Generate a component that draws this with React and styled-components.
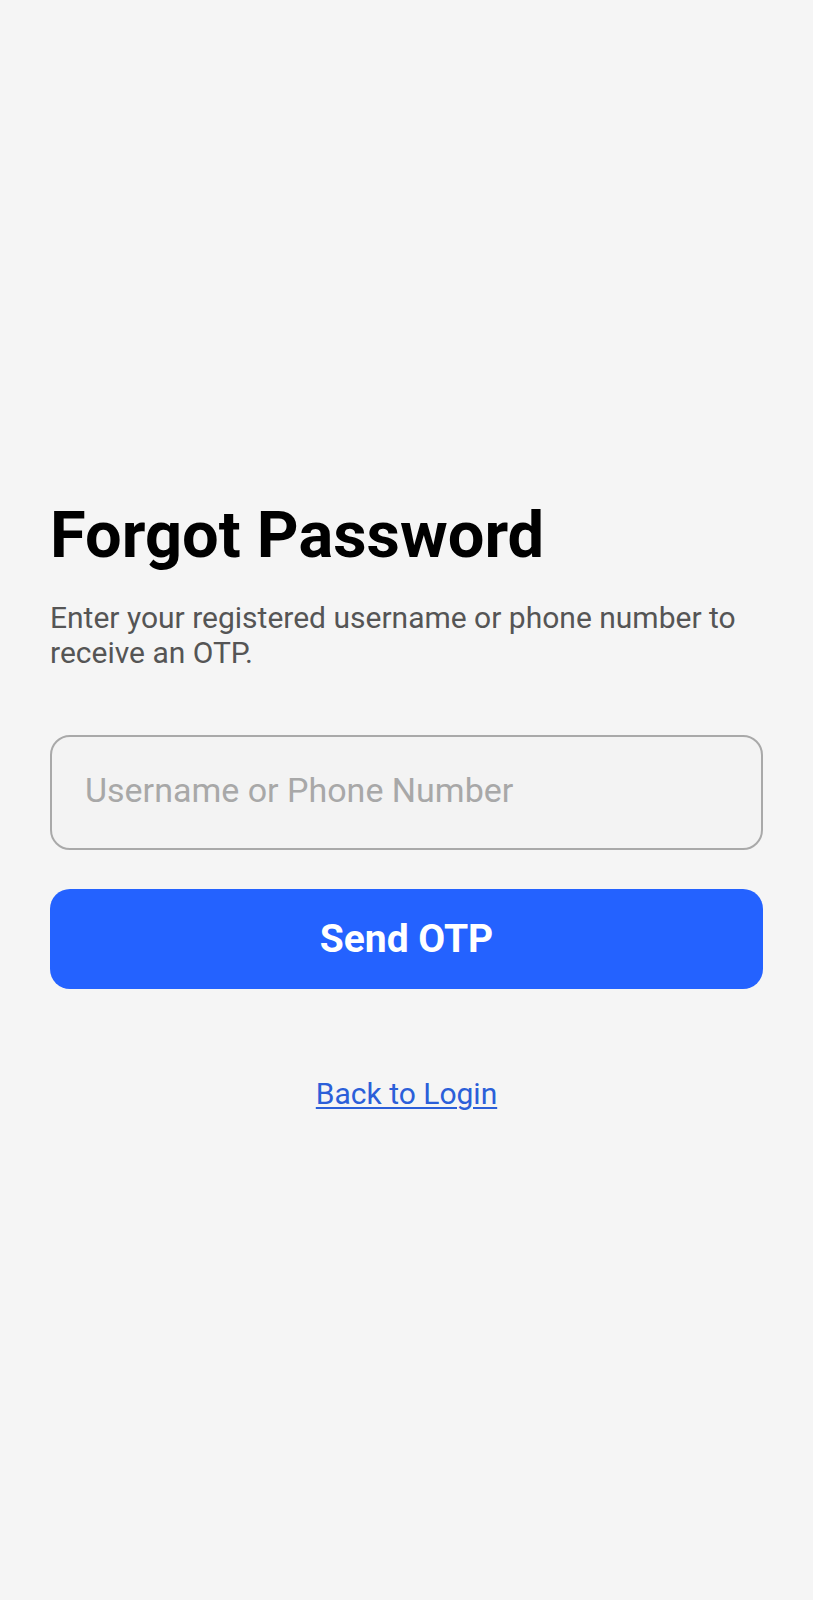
import React, { useState } from 'react';
import styled, { createGlobalStyle } from 'styled-components';

const GlobalStyle = createGlobalStyle`
  html, body {
    margin: 0;
    padding: 0;
    background: #f5f5f5;
  }
  * {
    box-sizing: border-box;
  }
`;

const Screen = styled.div`
  min-height: 100vh;
  padding: 12px 50px 0;
  display: flex;
  flex-direction: column;
  justify-content: center;
  background: #f5f5f5;
  font-family: Roboto, 'Noto Sans', sans-serif;
`;

const Title = styled.h1`
  margin: 0;
  font-size: 65px;
  line-height: 78px;
  font-weight: 700;
  color: #000;
`;

const Subtitle = styled.p`
  margin: 26px 0 0;
  font-size: 30px;
  line-height: 35px;
  color: #555;
`;

const Input = styled.input`
  margin-top: 65px;
  width: 100%;
  height: 115px;
  padding: 0 33px 4px;
  border: 2px solid #a9a9a9;
  border-radius: 20px;
  background: #f3f3f3;
  font-family: inherit;
  font-size: 34px;
  color: #222;
  outline: none;

  &::placeholder {
    color: #a8a8a8;
  }
`;

const Button = styled.button`
  margin-top: 39px;
  width: 100%;
  height: 100px;
  border: none;
  border-radius: 20px;
  background: #2462ff;
  color: #fff;
  font-family: inherit;
  font-size: 39px;
  font-weight: 700;
  cursor: pointer;
`;

const LinkRow = styled.div`
  margin-top: 87px;
  text-align: center;
  line-height: 36px;
`;

const BackLink = styled.a`
  font-size: 30px;
  color: #2b5fd9;
  text-decoration: underline;
  text-underline-offset: 3px;
  text-decoration-thickness: 2px;
  cursor: pointer;
`;

export default function App() {
  const [value, setValue] = useState('');

  return (
    <>
      <GlobalStyle />
      <Screen>
        <Title>Forgot Password</Title>
        <Subtitle>
          Enter your registered username or phone number to receive an OTP.
        </Subtitle>
        <Input
          placeholder="Username or Phone Number"
          value={value}
          onChange={e => setValue(e.target.value)}
        />
        <Button>Send OTP</Button>
        <LinkRow>
          <BackLink>Back to Login</BackLink>
        </LinkRow>
      </Screen>
    </>
  );
}
